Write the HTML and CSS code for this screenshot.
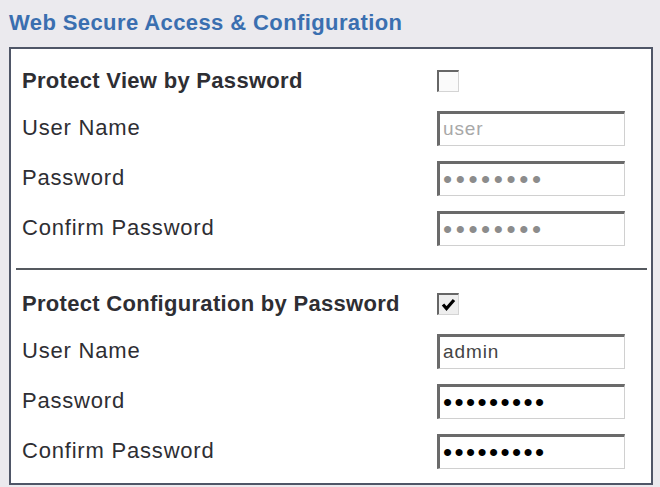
FILE: index.html
```html
<!DOCTYPE html>
<html lang="en">
<head>
  <meta charset="UTF-8">
  <meta name="viewport" content="width=device-width, initial-scale=1.0">
  <title>Web Secure Access &amp; Configuration</title>
  <link rel="stylesheet" href="styles.css">
</head>
<body>
  <h1 class="title">Web Secure Access &amp; Configuration</h1>

  <div class="panel">
    <div class="section">
      <div class="row head">
        <label>Protect View by Password</label>
        <span class="check"></span>
      </div>
      <div class="row">
        <label for="view_user">User Name</label>
        <input class="field" type="text" id="view_user" value="user" disabled>
      </div>
      <div class="row">
        <label for="view_pass">Password</label>
        <input class="field pass" type="password" id="view_pass" value="12345678" disabled>
      </div>
      <div class="row">
        <label for="view_confirm">Confirm Password</label>
        <input class="field pass" type="password" id="view_confirm" value="12345678" disabled>
      </div>
    </div>

    <div class="divider"></div>

    <div class="section">
      <div class="row head">
        <label>Protect Configuration by Password</label>
        <span class="check on">
          <svg width="15" height="15" viewBox="0 0 15 15"><path d="M2 7.5 L5.5 11.5 L13 3" fill="none" stroke="#000" stroke-width="3.2"/></svg>
        </span>
      </div>
      <div class="row">
        <label for="conf_user">User Name</label>
        <input class="field" type="text" id="conf_user" value="admin">
      </div>
      <div class="row">
        <label for="conf_pass">Password</label>
        <input class="field pass" type="password" id="conf_pass" value="123456789">
      </div>
      <div class="row">
        <label for="conf_confirm">Confirm Password</label>
        <input class="field pass" type="password" id="conf_confirm" value="123456789">
      </div>
    </div>
  </div>
</body>
</html>
```

FILE: styles.css
```css
body {
  margin: 0;
  font-family: "Liberation Sans", Arial, sans-serif;
  background-color: #ebeaee;
}
.title {
  margin: 0;
  height: 47px;
  padding-left: 9px;
  line-height: 45px;
  font-size: 22px;
  letter-spacing: 0.4px;
  color: #3a6fb0;
}
.panel {
  margin: 0 7px 0 9px;
  height: 434px;
  border: 2px solid #4f5667;
  background-color: #fff;
}
.section {
  padding: 10px 0 0 11px;
}
.row {
  display: flex;
  align-items: center;
  height: 50px;
}
.row.head {
  height: 44px;
}
.row label {
  width: 415px;
  font-size: 22px;
  letter-spacing: 0.8px;
  color: #2e2e33;
}
.row.head label {
  font-weight: bold;
  letter-spacing: 0.3px;
}
.check {
  display: flex;
  align-items: center;
  justify-content: center;
  box-sizing: border-box;
  width: 22px;
  height: 22px;
  border-top: 2px solid #666;
  border-left: 2px solid #666;
  border-right: 1px solid #d4d4d4;
  border-bottom: 1px solid #d4d4d4;
  background-color: #fafafa;
}
.check.on {
  background-color: #eeeeee;
}
.field {
  box-sizing: border-box;
  width: 188px;
  height: 35px;
  margin: 0;
  padding: 0 0 0 3px;
  border-top: 3px solid #6a6a6a;
  border-left: 3px solid #6a6a6a;
  border-right: 1px solid #d0d0d0;
  border-bottom: 1px solid #d0d0d0;
  background-color: #fff;
  font-family: "Liberation Sans", Arial, sans-serif;
  font-size: 19px;
  letter-spacing: 0.9px;
  color: #444;
  outline: none;
}
.field:disabled {
  color: #a8a8a8;
  background-color: #fff;
}
.field.pass {
  font-size: 26px;
  letter-spacing: 2.4px;
  color: #000;
}
.field.pass:disabled {
  letter-spacing: 3.6px;
  color: #8c8c8c;
}
.divider {
  height: 2px;
  margin: 15px 4px 2px 5px;
  background-color: #55595f;
}
```
